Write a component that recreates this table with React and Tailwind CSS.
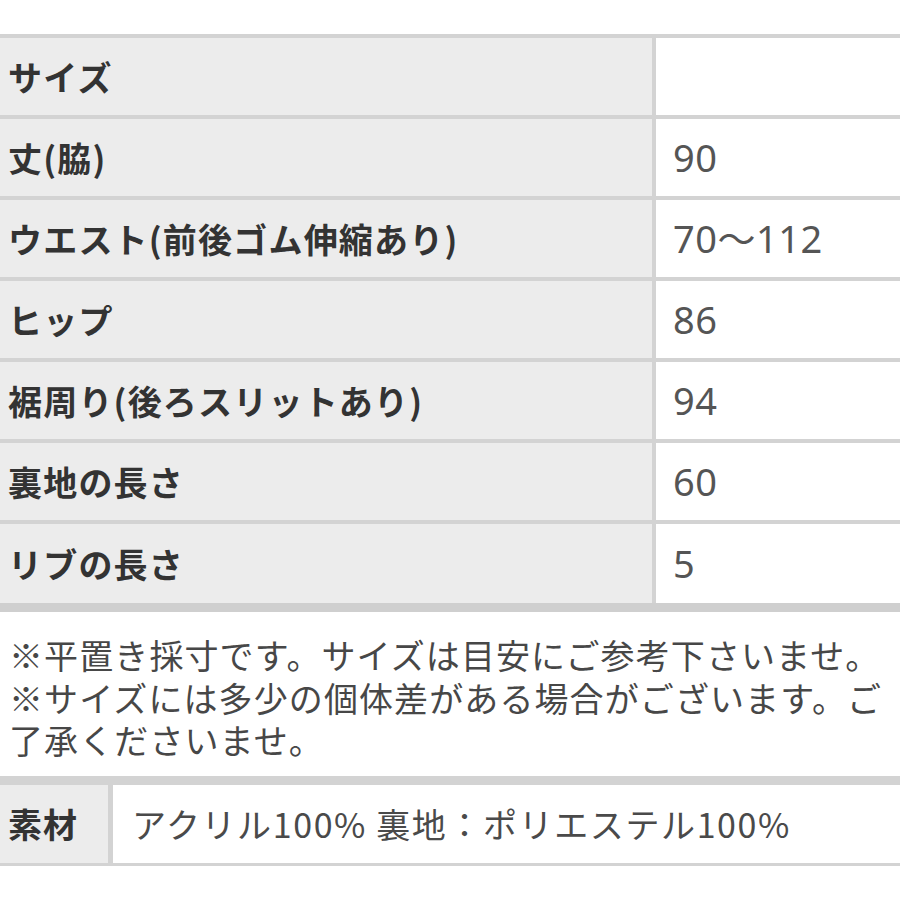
export default function App() {
  const rows = [
    ["サイズ", ""],
    ["丈(脇)", "90"],
    ["ウエスト(前後ゴム伸縮あり)", "70〜112"],
    ["ヒップ", "86"],
    ["裾周り(後ろスリットあり)", "94"],
    ["裏地の長さ", "60"],
    ["リブの長さ", "5"],
  ];
  return (
    <div className="w-[900px] h-[900px] bg-white overflow-hidden font-['Noto_Sans_CJK_JP',sans-serif]">
      <div className="h-[34px]" />
      <div className="border-t-4 border-[#d3d3d3]">
        {rows.map(([label, value], i) => (
          <div
            key={i}
            className={
              i === rows.length - 1
                ? "flex h-[88px] border-b-[9px] border-[#cfcfcf]"
                : "flex h-[81px] border-b-4 border-[#d3d3d3]"
            }
          >
            <div className="w-[656px] shrink-0 bg-[#ececec] border-r-4 border-[#d3d3d3] flex items-center pl-[8px] text-[34px] font-bold text-[#333333] tracking-[1.2px]">
              {label}
            </div>
            <div className="flex-1 bg-white flex items-center pl-[17px] text-[38px] text-[#555555] tracking-[0.5px] font-['Noto_Sans','Noto_Sans_CJK_JP',sans-serif]">
              {value}
            </div>
          </div>
        ))}
      </div>
      <div className="pt-[22px] pb-[14px] pl-[9px] text-[34px] leading-[42.5px] text-[#474747] tracking-[1.1px] whitespace-nowrap">
        <div>※平置き採寸です。サイズは目安にご参考下さいませ。</div>
        <div>※サイズには多少の個体差がある場合がございます。ご</div>
        <div>了承くださいませ。</div>
      </div>
      <div className="flex h-[90px] border-t-[9px] border-b-[3px] border-[#d3d3d3]">
        <div className="w-[113px] shrink-0 bg-[#ececec] border-r-[5px] border-[#d3d3d3] flex items-center pl-[8px] text-[34px] font-bold text-[#333333] tracking-[1px]">
          素材
        </div>
        <div className="flex-1 bg-white flex items-center pl-[19px] text-[34px] text-[#4a4a4a] tracking-[1.6px] whitespace-nowrap">
          アクリル100% 裏地：ポリエステル100%
        </div>
      </div>
    </div>
  );
}
